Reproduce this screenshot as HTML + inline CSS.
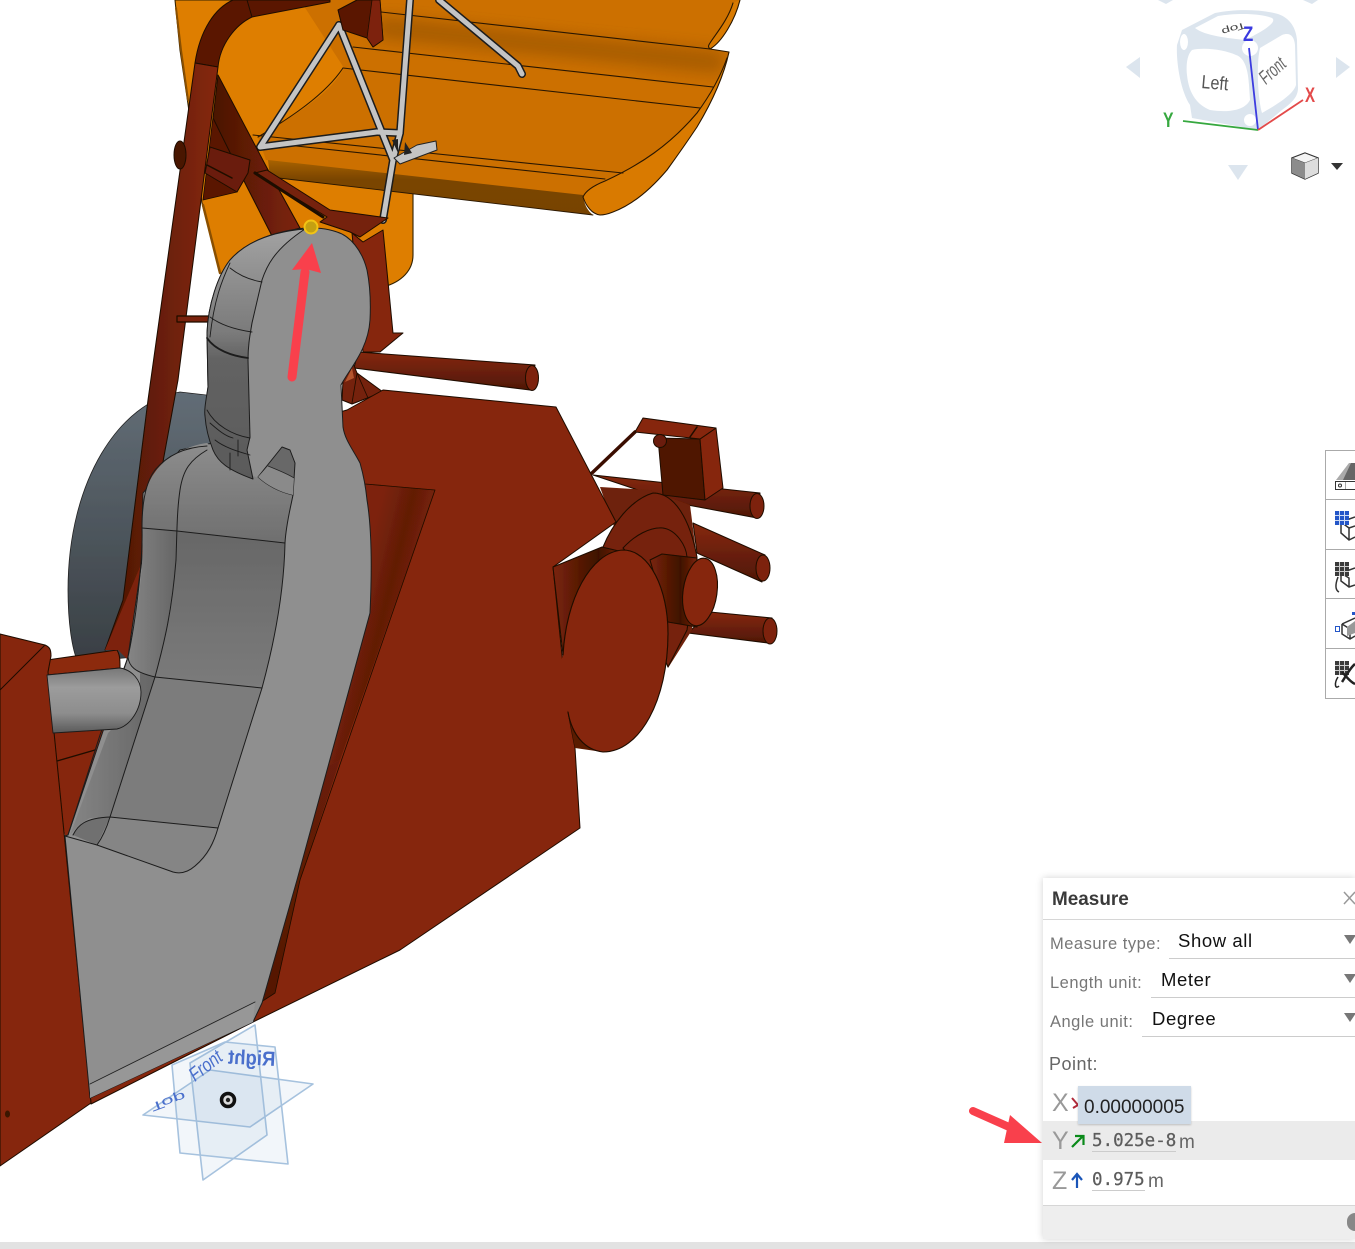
<!DOCTYPE html>
<html><head><meta charset="utf-8"><style>
html,body{margin:0;padding:0;background:#fff;width:1355px;height:1249px;overflow:hidden;font-family:"Liberation Sans",sans-serif}
svg{position:absolute;left:0;top:0}
.t{position:absolute;white-space:nowrap;line-height:1}
.lbl{color:#777;font-size:16.5px;letter-spacing:.5px}
.val{color:#111;font-size:18.5px;letter-spacing:.6px}
.ul{position:absolute;height:1px;background:#ccc}
.caret{position:absolute;left:1344px;width:0;height:0;border-left:6px solid transparent;border-right:6px solid transparent;border-top:9px solid #777}
.mono{font-family:"DejaVu Sans Mono","Liberation Mono",monospace;font-size:17.5px;color:#5c5c5c;-webkit-text-stroke:.25px #5c5c5c}
.ax{color:#999;font-size:25px}
</style></head><body>
<svg width="1355" height="1249" viewBox="0 0 1355 1249" xmlns="http://www.w3.org/2000/svg">
<defs>
<linearGradient id="disc" x1="0" y1="0" x2="0" y2="1"><stop offset="0" stop-color="#626d76"/><stop offset="1" stop-color="#393f44"/></linearGradient>
<linearGradient id="band" x1="0" y1="0" x2="0" y2="1"><stop offset="0" stop-color="#a86200"/><stop offset=".35" stop-color="#7a4500"/><stop offset="1" stop-color="#784300"/></linearGradient>
<linearGradient id="head" x1="0" y1="0" x2="0" y2="1"><stop offset="0" stop-color="#a2a2a2"/><stop offset=".42" stop-color="#7a7a7a"/><stop offset=".52" stop-color="#636363"/><stop offset="1" stop-color="#5a5a5a"/></linearGradient>
<linearGradient id="cavT" x1="0" y1="0" x2="0" y2="1"><stop offset="0" stop-color="#8d8d8d"/><stop offset="1" stop-color="#6f6f6f"/></linearGradient>
<linearGradient id="cavM" x1="0" y1="0" x2="0" y2="1"><stop offset="0" stop-color="#676767"/><stop offset="1" stop-color="#7b7b7b"/></linearGradient>
<linearGradient id="cavS" x1="0" y1="0" x2="1" y2="0"><stop offset="0" stop-color="#858585"/><stop offset="1" stop-color="#666"/></linearGradient>
<linearGradient id="cyl" x1="0" y1="0" x2="0" y2="1"><stop offset="0" stop-color="#777"/><stop offset=".3" stop-color="#9c9c9c"/><stop offset=".7" stop-color="#8d8d8d"/><stop offset="1" stop-color="#5a5a5a"/></linearGradient>
<linearGradient id="tube" x1="0" y1="0" x2="1" y2="0"><stop offset="0" stop-color="#4a1505"/><stop offset="1" stop-color="#86280a"/></linearGradient>
<linearGradient id="brace" x1="0" y1="0" x2="1" y2="0"><stop offset="0" stop-color="#4a1505"/><stop offset=".6" stop-color="#6a1e07"/><stop offset="1" stop-color="#7d2408"/></linearGradient>
<linearGradient id="rol" x1="0" y1="0" x2="0" y2="1"><stop offset="0" stop-color="#86280a"/><stop offset="1" stop-color="#4f1706"/></linearGradient>
<linearGradient id="side" gradientUnits="userSpaceOnUse" x1="365" y1="560" x2="425" y2="575"><stop offset="0" stop-color="#7d2408"/><stop offset=".5" stop-color="#621c06"/><stop offset="1" stop-color="#7f2408"/></linearGradient>
<linearGradient id="side2" x1="0" y1="0" x2="0" y2="1"><stop offset="0" stop-color="#6a1e07"/><stop offset="1" stop-color="#541805"/></linearGradient>
<linearGradient id="cy2" x1="0" y1="0" x2="1" y2="0"><stop offset="0" stop-color="#7a2408"/><stop offset=".65" stop-color="#3e1104"/><stop offset="1" stop-color="#7a2408"/></linearGradient>
<filter id="soft" x="-5%" y="-5%" width="110%" height="110%"><feGaussianBlur stdDeviation=".35"/></filter>
<filter id="blur6" x="-10%" y="-200%" width="120%" height="500%"><feGaussianBlur stdDeviation="8"/></filter>
<clipPath id="wingc"><path d="M300 0H740C735 20 722 42 710 49L729 52C724 75 712 102 697 127L583 197L266 160L259 133L344 68Z"/></clipPath>
</defs>

<g filter="url(#soft)" stroke-linejoin="round" stroke-linecap="round">
<!-- grey disc -->
<path d="M180 392C120 402 68 480 68 590C68 622 72 650 78 662L215 650L215 396Z" fill="url(#disc)" stroke="#222" stroke-width=".8"/>

<!-- orange back body -->
<path d="M175 0L180 50L187 97L202 203L220 273L383 287C402 282 413 270 413 255L413 150L420 0Z" fill="#de7e00" stroke="#332000" stroke-width="1.100"/>
<path d="M176 8L181 50L188 100" stroke="#8a5000" stroke-width="2" fill="none"/>
<path d="M203 205L220 273" stroke="#8a5000" stroke-width="2.500" fill="none"/>

<!-- wing -->
<path d="M300 0H740C735 20 722 42 710 49L729 52C724 75 712 102 697 127C685 145 680 152 667 170C650 190 632 205 613 212C608 214 604 215 600 215C592 214 586 206 583 197L266 160L258 137C290 118 330 95 344 68Z" fill="#cc7000"/>
<g clip-path="url(#wingc)"><path d="M385 28L715 62" stroke="#7a4500" stroke-width="22" opacity=".45" fill="none" filter="url(#blur6)"/></g>
<path d="M733 3C728 20 715 35 710 43C708 46 708 47 710 49C722 42 735 20 740 0Z" fill="#d97a00"/>
<path d="M268 160L583 195C584 205 588 211 593 215L270 177Z" fill="url(#band)"/>
<path d="M583 197C586 190 595 185 605 181C640 165 670 145 697 113C708 98 720 78 727 58L729 52C724 75 712 102 697 127C685 145 680 152 667 170C650 190 632 205 613 212C608 214 604 215 600 215C592 214 586 206 583 197Z" fill="#d97a00"/>
<g fill="none" stroke="#2a1800" stroke-width="1.100">
<path d="M740 0C735 20 722 42 710 49L729 52C724 75 712 102 697 127C685 145 680 152 667 170C650 190 632 205 613 212C608 214 604 215 600 215C592 214 586 206 583 197"/>
<path d="M733 3C728 20 715 35 710 43C708 46 708 47 710 49"/>
<path d="M381 12L710 49"/><path d="M353 47L713 87"/><path d="M343 68L700 108"/>
<path d="M253 135L623 173"/><path d="M259 142L605 179"/>
<path d="M583 197C586 190 595 185 605 181C640 165 670 145 697 113C708 98 720 78 727 58"/>
<path d="M258 137C290 118 325 95 343 68"/>
<path d="M270 177L593 215" stroke-width=".9"/>
</g>

<!-- struts -->
<g fill="none" stroke="#1c1c1c" stroke-width="8">
<path d="M439 0L518 66L522 74"/><path d="M339 25L260 147L377 132"/><path d="M339 25L393 160L383 220"/><path d="M377 132L400 133L410 0"/><path d="M393 160L400 133"/>
</g>
<g fill="none" stroke="#c4c4c4" stroke-width="5">
<path d="M439 0L518 66L522 74"/><path d="M339 25L260 147L377 132"/><path d="M339 25L393 160L383 220"/><path d="M377 132L400 133L410 0"/><path d="M393 160L400 133"/>
</g>
<path d="M394 158L417 145L436 141L437 150L400 164Z" fill="#c4c4c4" stroke="#222" stroke-width="1"/>
<path d="M392 140L398 139L398 153ZM405 142L412 153L404 155Z" fill="#222"/>

<!-- rust frame -->
<path d="M233 0C215 8 200 30 195 63L218 67C220 45 235 25 252 17L330 2V0Z" fill="#5a1906" stroke="#1e0902" stroke-width="1"/>
<path d="M247 0L252 17" stroke="#1e0902" fill="none"/>
<path d="M195 63L148 400L123 600L105 650L135 640L145 560L178 380L218 67Z" fill="url(#tube)" stroke="#1e0902" stroke-width="1"/>
<ellipse cx="180" cy="155" rx="6" ry="14" fill="#4a1505" stroke="#1e0902"/>
<path d="M213 117L250 160L237 192L203 200Z" fill="#5a1906" stroke="#1e0902" stroke-width=".8"/>
<path d="M218 75L267 168L300 228L272 236L246 185L213 118Z" fill="url(#brace)" stroke="#1e0902" stroke-width="1"/>
<path d="M210 147L250 160L248 173L237 192L205 173Z" fill="#6a1e07" stroke="#1e0902" stroke-width="1"/>
<path d="M207 165L232 178" stroke="#1e0902" stroke-width="1.500" fill="none"/>
<path d="M255 173L267 170L330 210L388 218L360 237L350 232L320 222L327 217Z" fill="#742108" stroke="#1e0902" stroke-width="1"/>
<path d="M255 173L323 217" stroke="#1a0802" stroke-width="3" fill="none"/>
<path d="M352 233L363 242L383 230L393 333L403 333L380 352L363 352Z" fill="#862608" stroke="#1e0902" stroke-width="1"/>
<path d="M338 10L357 0H380L383 40L373 47L367 38L343 30Z" fill="#5a1906" stroke="#1e0902" stroke-width="1"/>
<path d="M372 0H380L383 40L373 47L367 38Z" fill="#7d2408" stroke="#1e0902" stroke-width=".8"/>
<rect x="177" y="316" width="32" height="6" fill="#7a2408" stroke="#1e0902" stroke-width="1.200"/>

<!-- back rollers -->
<path d="M593 475L760 493L757 518L677 503Z" fill="url(#rol)" stroke="#1e0902"/>
<ellipse cx="757" cy="506" rx="7" ry="12.500" fill="#7d2408" stroke="#1e0902"/>
<path d="M693 523L765 555L762 582L697 553Z" fill="url(#rol)" stroke="#1e0902"/>
<ellipse cx="763" cy="568" rx="7" ry="13" fill="#7d2408" stroke="#1e0902"/>
<path d="M710 612L772 618L768 643L688 633Z" fill="url(#rol)" stroke="#1e0902"/>
<ellipse cx="770" cy="631" rx="7" ry="13" fill="#7d2408" stroke="#1e0902"/>
<!-- bracket -->
<path d="M592 473L635 432" stroke="#3a1004" stroke-width="3.500" fill="none"/>
<path d="M658 438L700 439L705 500L663 495Z" fill="#4f1706" stroke="#1e0902"/>
<path d="M700 439L716 428L723 488L705 500Z" fill="#862608" stroke="#1e0902"/>
<path d="M635 432L643 418L716 428L700 439Z" fill="#862608" stroke="#1e0902"/>
<path d="M697 427L690 437" stroke="#1e0902" stroke-width="1.500"/>
<circle cx="660" cy="441" r="6.500" fill="#6a1e07" stroke="#1e0902"/>
<!-- plate discs -->
<path d="M600 487L650 490L690 505L697 560L692 630L668 668L640 600Z" fill="#6e2007"/>
<path d="M603 547C612 525 630 500 653 493C675 493 690 520 697 557L687 630L668 667L640 600Z" fill="#762208" stroke="#1e0902"/>
<path d="M623 548C635 535 650 527 663 528C676 530 686 545 687 557L670 600Z" fill="#762208" stroke="#1e0902"/>
<path d="M650 560L662 554L697 558L697 627L668 622Z" fill="url(#cy2)" stroke="#1e0902"/>
<ellipse cx="700" cy="592" rx="17" ry="34" transform="rotate(8 700 592)" fill="#862608" stroke="#1e0902" stroke-width="1.100"/>

<!-- handle -->
<path d="M358 352L535 365L530 390L354 368Z" fill="url(#rol)" stroke="#1e0902"/>
<ellipse cx="532" cy="378" rx="6.500" ry="12.500" fill="#7d2408" stroke="#1e0902"/>
<path d="M343 380L353 363L357 373L383 392L352 404L342 400Z" fill="#742108" stroke="#1e0902"/>
<path d="M345 382L352 368L354 378Z" fill="#b5552f"/>
<path d="M357 373L352 403M357 373L368 398" stroke="#1e0902" fill="none" stroke-width=".8"/>

<!-- main body -->
<path d="M347 410L383 390L556 407L616 522L553 567L562 655L568 712L575 748L580 828L400 950L253 1022L91 1104L65 836L205 450Z" fill="#862608" stroke="#1e0902" stroke-width="1"/>
<path d="M365 484L435 490L340 760L300 780Z" fill="url(#side)"/>
<path d="M340 760L300 880L275 993L258 1004L300 780Z" fill="url(#side2)"/>
<path d="M365 484L435 490L300 880L275 993L258 1004" fill="none" stroke="#1e0902" stroke-width=".8"/>
<!-- front disc -->
<path d="M553 567L602 547L623 552L563 655Z" fill="url(#cy2)" stroke="#1e0902"/>
<path d="M568 712L575 748L603 752L590 720Z" fill="#5a1a06"/>
<path d="M563 655C566 600 590 552 623 550C650 550 668 590 668 633C668 700 640 752 603 752C585 750 572 735 568 712L552 690Z" fill="#862608"/>
<path d="M563 655C566 600 590 552 623 550C650 550 668 590 668 633C668 700 640 752 603 752C585 750 572 735 568 712" fill="none" stroke="#1e0902" stroke-width="1.100"/>

<!-- left lower wedge -->
<path d="M52 733L105 730L70 835L65 836L57 790Z" fill="#862608"/>
<path d="M57 761L95 750" stroke="#1e0902" fill="none" stroke-width="1.200"/>
<path d="M47 660L117 650C120 655 120 660 120 668L47 675Z" fill="#8c2a0a" stroke="#1e0902"/>
<path d="M105 650L123 607L145 555L148 600L128 660L118 650Z" fill="#7d2408"/>
<!-- left block -->
<path d="M0 634L45 645C50 647 51 650 51 656L48 672L91 1103L0 1166Z" fill="#862608" stroke="#1e0902" stroke-width="1"/>
<path d="M0 690L45 645" stroke="#1e0902" fill="none"/>
<ellipse cx="7.500" cy="1114" rx="2.500" ry="3.500" fill="#3a1206"/>

<!-- seat silhouette -->
<path d="M65 836L90 1098L253 1022L262 1003L297 880L370 613C372 570 372 530 367 500C365 480 362 470 360 463C352 448 345 440 343 427L341 385C350 368 368 350 370 320C371 300 370 285 367 270C362 250 350 236 337 232C325 228 318 228 305 228C270 232 245 243 230 260C218 275 208 305 207 333L208 387L205 413L213 443L180 450L143 493L142 527L143 553L128 657L68 835Z" fill="#8f8f8f" stroke="#1e1e1e" stroke-width="1"/>
<path d="M90 1084L255 1002L253 1022L90 1098Z" fill="#979797"/>
<path d="M90 1084L255 1002" stroke="#222" fill="none" stroke-width=".9"/>

<!-- seat cavity -->
<path d="M207 443C190 445 167 455 155 472C145 485 142 505 142 528L285 543C286 525 290 510 293 495L258 478L240 470Z" fill="url(#cavT)"/>
<path d="M177 531L285 543C284 590 275 640 262 688L155 677C168 630 176 580 177 531Z" fill="url(#cavM)"/>
<path d="M142 528L177 531C176 580 168 630 155 677L140 673C131 668 128 662 128 657C135 620 145 575 142 528Z" fill="url(#cavS)"/>
<path d="M155 677L262 688L218 828L110 817Z" fill="#7b7b7b"/>
<path d="M155 677L110 817L90 818C82 822 76 828 70 835L108 733L140 700L140 673Z" fill="url(#cavS)"/>
<path d="M73 835C78 825 85 818 110 817L97 845Z" fill="#6f6f6f"/>
<path d="M110 817L218 828C214 845 208 860 187 872L173 872L97 845Z" fill="#858585"/>
<g fill="none" stroke="#1c1c1c" stroke-width="1">
<path d="M65 836L97 845L173 872C180 874 187 873 195 866C208 855 214 842 218 828L262 688C275 640 284 590 285 543C286 525 290 510 293 495"/>
<path d="M207 446C190 447 170 452 155 470C145 483 142 505 142 528C143 560 136 620 128 657C129 666 134 672 155 677"/>
<path d="M207 450C190 460 183 470 180 490C177 510 177 530 176 560C172 610 165 640 155 677L110 817C106 830 102 838 97 845"/>
<path d="M142 528L177 531L285 543"/><path d="M155 677L262 688"/>
<path d="M73 835C78 825 85 818 110 817L218 828"/>
<path d="M128 657L100 735L68 835"/>
</g>

<!-- headrest -->
<path d="M305 229C270 232 245 243 230 260C218 275 208 305 207 333L208 387C206 400 204 410 205 416C206 430 209 440 213 450C218 462 228 470 253 479L247 450L250 437L248 360C248 345 250 335 252 323L262 280C266 268 273 250 305 229Z" fill="url(#head)" stroke="#1c1c1c" stroke-width="1"/>
<g fill="none" stroke="#1c1c1c" stroke-width=".9">
<path d="M230 268C240 276 250 280 262 282"/><path d="M210 317C222 326 238 330 252 332"/><path d="M207 338C215 350 232 356 248 358" stroke-width="1.800"/>
<path d="M230 263C222 280 214 300 210 337"/>
<path d="M207 410C215 425 232 435 250 438"/><path d="M210 423C218 430 225 436 233 438"/><path d="M215 440C225 448 240 452 250 455"/>
<path d="M230 453V470M238 440V456"/>
</g>
<!-- notch -->
<path d="M258 477L282 447L290 450L295 463L293 495C280 492 268 486 258 477Z" fill="#686868" stroke="#1c1c1c"/>
<path d="M268 466C278 470 288 474 294 478L293 495C280 492 268 486 258 477Z" fill="#8a8a8a"/>
<path d="M268 466C278 470 288 474 294 478" stroke="#222" fill="none" stroke-width=".7"/>

<!-- cylinder -->
<path d="M47 675L120 668C132 670 141 680 141 692C141 710 130 726 117 729L53 733Z" fill="url(#cyl)" stroke="#1c1c1c" stroke-width=".9"/>
</g>

<!-- pin + arrow -->
<path d="M292 377L305 272" stroke="#f9404c" stroke-width="9" stroke-linecap="round" fill="none"/>
<path d="M292 270L312 243L321 273L306 269Z" fill="#f9404c"/>
<circle cx="311" cy="227" r="6.500" fill="#c4a012" stroke="#f2c414" stroke-width="2"/>

<!-- origin planes -->
<g stroke="#a6c2de" stroke-width="1.600" fill="rgba(130,170,210,.1)" stroke-linejoin="round">
<path d="M143 1115L210 1070L313 1084L250 1127Z"/>
<path d="M190 1063L203 1180L267 1135L255 1025Z"/>
<path d="M172 1065L180 1153L288 1164L275 1047L225 1042Z"/>
</g>
<g font-family="'Liberation Sans',sans-serif" fill="#4a6fcc">
<text transform="translate(275 1066) rotate(3) scale(-.95 1.05)" font-size="19.500" font-weight="bold">Right</text>
<text transform="translate(195 1082) rotate(-38) scale(1.05 1.3)" font-size="15" font-style="italic">Front</text>
<text transform="translate(150 1104) rotate(-20) scale(1.400 -.75)" font-size="16">Top</text>
</g>
<circle cx="228" cy="1100" r="6.500" fill="#ddd" stroke="#111" stroke-width="3.500"/>
<circle cx="228" cy="1100" r="2.200" fill="#222"/>

<!-- view cube -->
<g fill="#dce5ee">
<path d="M1126 67L1140 57V78Z"/><path d="M1350 67L1336 57V78Z"/><path d="M1228 165H1248L1238 180Z"/><path d="M1158 0H1173L1166 4Z"/><path d="M1303 0H1318L1312 4Z"/>
<path d="M1182 30L1215 13C1235 9 1260 9 1278 14C1290 18 1296 28 1297 40L1298 88C1298 98 1290 104 1282 110L1258 130L1192 118L1190 105C1180 90 1176 60 1177 45Z"/>
</g>
<g fill="#fff">
<path d="M1192 50C1205 47 1225 50 1236 55C1245 58 1248 70 1249 85L1250 100C1245 110 1230 113 1210 110C1198 105 1189 95 1187 75C1186 65 1187 55 1192 50Z"/>
<path d="M1260 48L1282 35C1290 32 1294 36 1295 45L1296 85C1294 92 1285 100 1262 113C1258 100 1256 65 1260 48Z"/>
<path d="M1195 28L1218 16C1235 13 1260 13 1272 18C1278 22 1262 32 1245 40C1228 38 1205 36 1195 28Z"/>
<circle cx="1250" cy="48" r="8" fill="#fff"/><circle cx="1250" cy="120" r="6"/>
<ellipse cx="1184" cy="42" rx="4" ry="8"/>
</g>
<g fill="#555" font-family="'Liberation Sans',sans-serif">
<text transform="translate(1201 88) rotate(5) scale(.85 1)" font-size="19">Left</text>
<text transform="translate(1266 85) rotate(-42) scale(.85 1.35)" font-size="14.500" font-style="italic" fill="#666">Front</text>
<text transform="translate(1245 22) rotate(163) scale(1.300 .75)" font-size="12" fill="#444">Top</text>
</g>
<path d="M1249 48L1258 130" stroke="#3c3ce0" stroke-width="1.800"/>
<path d="M1183 121L1258 130" stroke="#36a83f" stroke-width="1.800"/>
<path d="M1258 130L1303 100" stroke="#e34a4a" stroke-width="1.800"/>
<text transform="translate(1243 41) scale(.8 1)" font-family="'Liberation Sans',sans-serif" font-size="21" font-weight="bold" fill="#3a3ae0">Z</text>
<text transform="translate(1305 102) scale(.72 1)" font-family="'Liberation Sans',sans-serif" font-size="21" font-weight="bold" fill="#e34a4a">X</text>
<text transform="translate(1163 127) scale(.75 1)" font-family="'Liberation Sans',sans-serif" font-size="21" font-weight="bold" fill="#36a83f">Y</text>
<path d="M1305 153L1318 158L1318 173L1305 179L1292 173L1292 158Z" fill="#b5b5b5" stroke="#333" stroke-width="1.400"/>
<path d="M1292 158L1305 163L1318 158L1305 153Z" fill="#f4f4f4" stroke="#333" stroke-width=".8"/>
<path d="M1305 163L1318 158V173L1305 179Z" fill="#ddd"/>
<path d="M1292 158L1305 163V179L1292 173Z" fill="#8c8c8c"/>
<path d="M1331 163H1343L1337 170Z" fill="#333"/>

<!-- toolbar -->
<path d="M1355 450.500H1325.500V698.500H1355M1326 499.500H1355M1326 549.500H1355M1326 598.500H1355M1326 648.500H1355" fill="none" stroke="#aaa" stroke-width="1"/>
<path d="M1336 480L1349 463H1355V480Z" fill="#aaa"/><path d="M1343 480L1351 463H1355V480Z" fill="#666"/>
<rect x="1335.500" y="481.500" width="22" height="8" fill="#fff" stroke="#333"/><circle cx="1340" cy="485.500" r="1.500" fill="none" stroke="#333"/><path d="M1345.500 482V489" stroke="#aaa"/>
<g fill="none" stroke="#333" stroke-width="1.500">
<path d="M1341 522L1355 517M1341 522V533L1349 540L1355 537M1341 522L1349 528V540M1349 528L1355 526"/>
<path d="M1341 573L1355 568M1341 573V581L1349 587L1355 585M1341 573L1349 578V587"/><path d="M1338 577C1335 585 1335 590 1339 592"/>
<path d="M1342 624L1355 618M1342 624V634L1350 639L1355 636M1342 624L1350 629V639"/>
</g>
<g fill="#2456c8"><rect x="1335" y="511" width="14" height="14"/><rect x="1352" y="612" width="3" height="3"/></g>
<g fill="#3a3a3a"><rect x="1335" y="562" width="14" height="14"/><rect x="1335" y="661" width="14" height="14"/></g>
<path d="M1335 515.500H1349M1335 520.500H1349M1339.500 511V525M1344.500 511V525" stroke="#cfdcf5" stroke-width="1"/>
<path d="M1335 566.500H1349M1335 571.500H1349M1339.500 562V576M1344.500 562V576M1335 665.500H1349M1335 670.500H1349M1339.500 661V675M1344.500 661V675" stroke="#ccc" stroke-width="1"/>
<path d="M1347 627L1355 621V633L1347 636Z" fill="#999"/>
<rect x="1335.500" y="626.500" width="4" height="5" fill="none" stroke="#2456c8"/>
<path d="M1338 677C1334 683 1335 690 1339 686" fill="none" stroke="#222" stroke-width="1.500"/>
<path d="M1342 682C1346 676 1350 668 1355 664M1342 672C1346 676 1350 682 1355 684" fill="none" stroke="#222" stroke-width="2.500"/>

<!-- annotation arrow -->
<path d="M973 1111L1018 1131" stroke="#f9404c" stroke-width="8" stroke-linecap="round"/>
<path d="M1010 1115L1042 1143L1004 1143Z" fill="#f9404c"/>
</svg>

<!-- bottom bar -->
<div style="position:absolute;left:0;top:1242px;width:1355px;height:7px;background:#e2e2e2"></div>

<!-- measure panel -->
<div style="position:absolute;left:1043px;top:878px;width:312px;height:361px;background:#fff;box-shadow:0 0 7px rgba(0,0,0,.18)"></div>
<div class="t" style="left:1052px;top:890px;font-size:19.500px;font-weight:bold;color:#3a3a3a;transform:scaleX(.97);transform-origin:left">Measure</div>
<svg width="1355" height="1249" style="pointer-events:none"><path d="M1344 892L1355 904M1355 892L1344 904" stroke="#999" stroke-width="1.500" fill="none"/></svg>
<div class="ul" style="left:1043px;top:919px;width:312px;background:#d6d6d6"></div>
<div class="t lbl" style="left:1050px;top:936px">Measure type:</div>
<div class="t val" style="left:1178px;top:932px">Show all</div>
<div class="ul" style="left:1169px;top:958px;width:186px"></div>
<div class="caret" style="top:935px"></div>
<div class="t lbl" style="left:1050px;top:975px">Length unit:</div>
<div class="t val" style="left:1161px;top:971px">Meter</div>
<div class="ul" style="left:1151px;top:997px;width:204px"></div>
<div class="caret" style="top:974px"></div>
<div class="t lbl" style="left:1050px;top:1014px">Angle unit:</div>
<div class="t val" style="left:1152px;top:1010px">Degree</div>
<div class="ul" style="left:1142px;top:1036px;width:213px"></div>
<div class="caret" style="top:1013px"></div>
<div class="t" style="left:1049px;top:1055px;font-size:18px;color:#666;letter-spacing:.5px">Point:</div>

<div style="position:absolute;left:1043px;top:1121px;width:312px;height:39px;background:#ebebeb"></div>
<div class="t ax" style="left:1052px;top:1091px">X</div>
<div class="t ax" style="left:1052px;top:1129px">Y</div>
<div class="t ax" style="left:1052px;top:1169px">Z</div>
<svg width="1355" height="1249" style="pointer-events:none">
<path d="M1072 1098L1078 1105M1078 1105L1073 1108" stroke="#b02a3a" stroke-width="2" fill="none"/>
<path d="M1072 1147L1083 1136M1075 1136H1083.500V1145" stroke="#0a8a1a" stroke-width="2.200" fill="none"/>
<path d="M1077 1188V1174M1072 1180L1077 1174L1082 1180" stroke="#1a55b8" stroke-width="2.200" fill="none"/>
</svg>
<div style="position:absolute;left:1078px;top:1086px;width:113px;height:38px;background:#cfdbe8;box-shadow:0 1px 2px rgba(0,0,0,.2)"></div>
<div class="t" style="left:1084px;top:1098px;font-size:19px;color:#222">0.00000005</div>
<div class="t mono" style="left:1092px;top:1133px">5.025e-8</div>
<div class="ul" style="left:1092px;top:1151px;width:84px"></div>
<div class="t" style="left:1179px;top:1133px;font-size:19px;color:#666">m</div>
<div class="t mono" style="left:1092px;top:1172px">0.975</div>
<div class="ul" style="left:1092px;top:1190px;width:53px"></div>
<div class="t" style="left:1148px;top:1172px;font-size:19px;color:#666">m</div>
<div style="position:absolute;left:1043px;top:1205px;width:312px;height:34px;background:#eee;border-top:1px solid #d6d6d6;box-sizing:border-box"></div>
<div style="position:absolute;left:1347px;top:1213px;width:8px;height:18px;background:#888;border-radius:9px 0 0 9px"></div>
</body></html>
